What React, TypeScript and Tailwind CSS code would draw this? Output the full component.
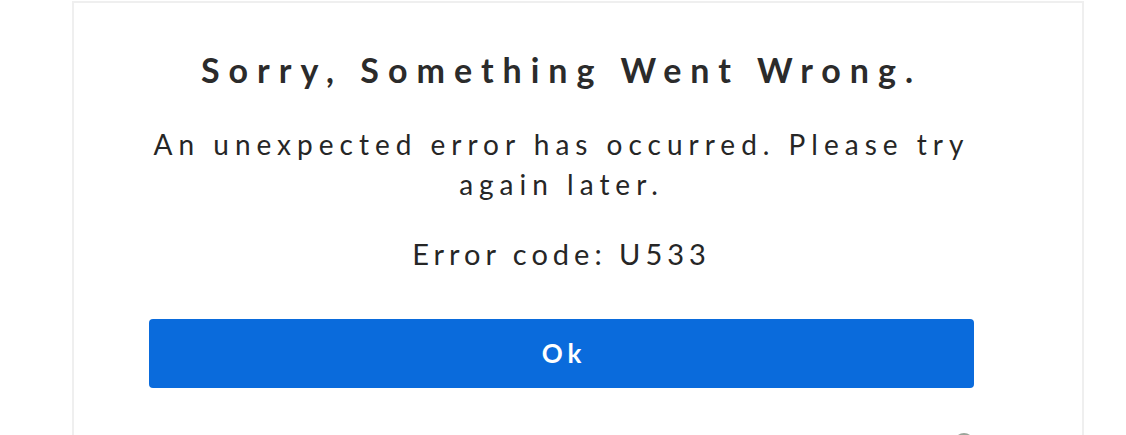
import React from "react";

export default function App() {
  return (
    <div className="w-[1126px] h-[435px] overflow-hidden bg-white flex justify-start" style={{ fontFamily: "Lato, 'Noto Sans', sans-serif" }}>
      <div className="relative ml-[72px] mt-px w-[1012px] h-[480px] border-2 border-[#efefef] pl-[75px] pr-[108px] flex flex-col items-stretch">
        <h1 className="mt-[47px] text-center text-[34px] leading-[40px] font-bold text-[#2b2b2b] tracking-[9px]">
          Sorry, Something Went Wrong.
        </h1>
        <p className="mt-[34px] text-center text-[28px] leading-[40px] text-[#262626] tracking-[6px]">
          An unexpected error has occurred. Please try
          <br />
          again later.
        </p>
        <p className="mt-[30px] text-center text-[29px] leading-[40px] text-[#262626] tracking-[5px]">
          Error code: U533
        </p>
        <button className="mt-[45px] h-[69px] w-full rounded-[4px] bg-[#0a6bdc] flex items-center justify-center text-white text-[26px] font-bold tracking-[5px] pl-[5px]">
          Ok
        </button>
        <div className="absolute left-[880px] top-[430px] w-[20px] h-[20px] rounded-full bg-[#9aa59a]" />
      </div>
    </div>
  );
}
